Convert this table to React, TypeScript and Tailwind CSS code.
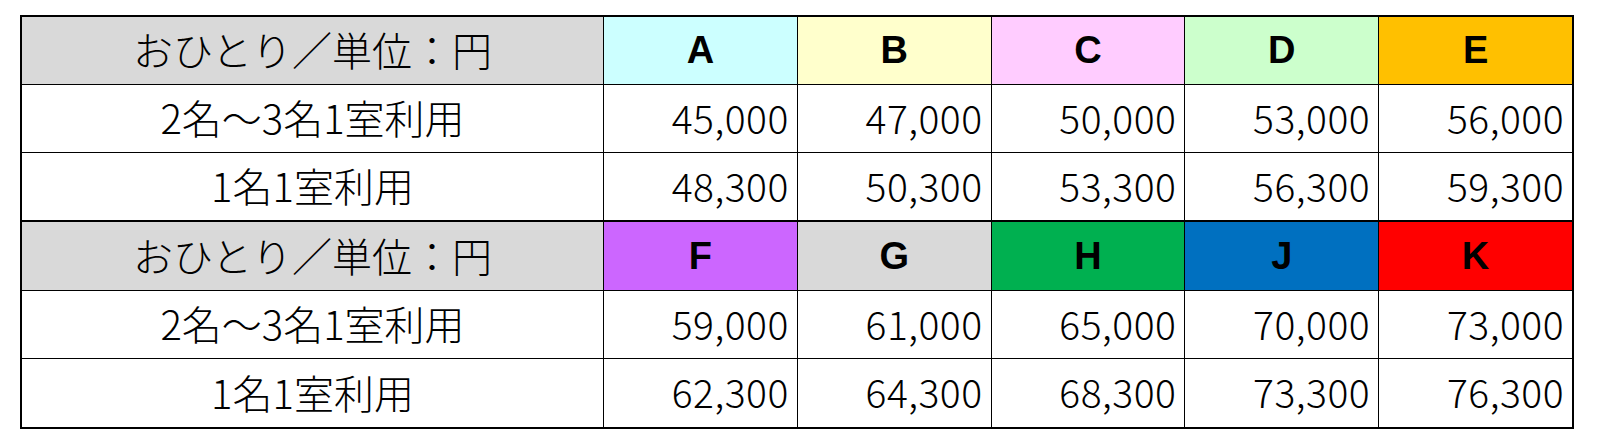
import React from "react";

type Group = {
  headers: { label: string; bg: string }[];
  pair: string[];
  single: string[];
};

const groups: Group[] = [
  {
    headers: [
      { label: "A", bg: "bg-[#ccffff]" },
      { label: "B", bg: "bg-[#ffffcc]" },
      { label: "C", bg: "bg-[#ffccff]" },
      { label: "D", bg: "bg-[#ccffcc]" },
      { label: "E", bg: "bg-[#ffc000]" },
    ],
    pair: ["45,000", "47,000", "50,000", "53,000", "56,000"],
    single: ["48,300", "50,300", "53,300", "56,300", "59,300"],
  },
  {
    headers: [
      { label: "F", bg: "bg-[#cc66ff]" },
      { label: "G", bg: "bg-[#d9d9d9]" },
      { label: "H", bg: "bg-[#00b050]" },
      { label: "J", bg: "bg-[#0070c0]" },
      { label: "K", bg: "bg-[#ff0000]" },
    ],
    pair: ["59,000", "61,000", "65,000", "70,000", "73,000"],
    single: ["62,300", "64,300", "68,300", "73,300", "76,300"],
  },
];

const jp = "font-['Noto_Sans_CJK_JP',sans-serif] font-light";

const Row = ({
  label,
  values,
  h,
}: {
  label: string;
  values: string[];
  h: string;
}) => (
  <div className={`grid grid-cols-[581px_repeat(5,1fr)] border-t border-black ${h}`}>
    <div className={`flex items-center justify-center pb-[3px] text-[40px] ${jp}`}>{label}</div>
    {values.map((v, i) => (
      <div
        key={i}
        className={`flex items-center justify-end pr-[8px] pb-[3px] border-l border-black text-[39px] tracking-[0.5px] ${jp}`}
      >
        {v}
      </div>
    ))}
  </div>
);

export default function App() {
  return (
    <div className="bg-white w-[1598px] h-[447px] pt-[15px] pl-[20px] text-black">
      <div className="w-[1554px] border-2 border-black">
        {groups.map((g, gi) => (
          <div key={gi} className={gi > 0 ? "border-t-2 border-black" : ""}>
            <div
              className={`grid grid-cols-[581px_repeat(5,1fr)] ${gi > 0 ? "h-[68px]" : "h-[67px]"}`}
            >
              <div className={`flex items-center justify-center pb-[3px] bg-[#d9d9d9] text-[40px] ${jp}`}>
                おひとり／単位：円
              </div>
              {g.headers.map((h) => (
                <div
                  key={h.label}
                  className={`flex items-center justify-center border-l border-black font-bold text-[38px] font-['Liberation_Sans',Arial,sans-serif] ${h.bg}`}
                >
                  {h.label}
                </div>
              ))}
            </div>
            <Row label="2名～3名1室利用" values={g.pair} h="h-[68px]" />
            <Row label="1名1室利用" values={g.single} h={gi > 0 ? "h-[69px]" : "h-[68px]"} />
          </div>
        ))}
      </div>
    </div>
  );
}
